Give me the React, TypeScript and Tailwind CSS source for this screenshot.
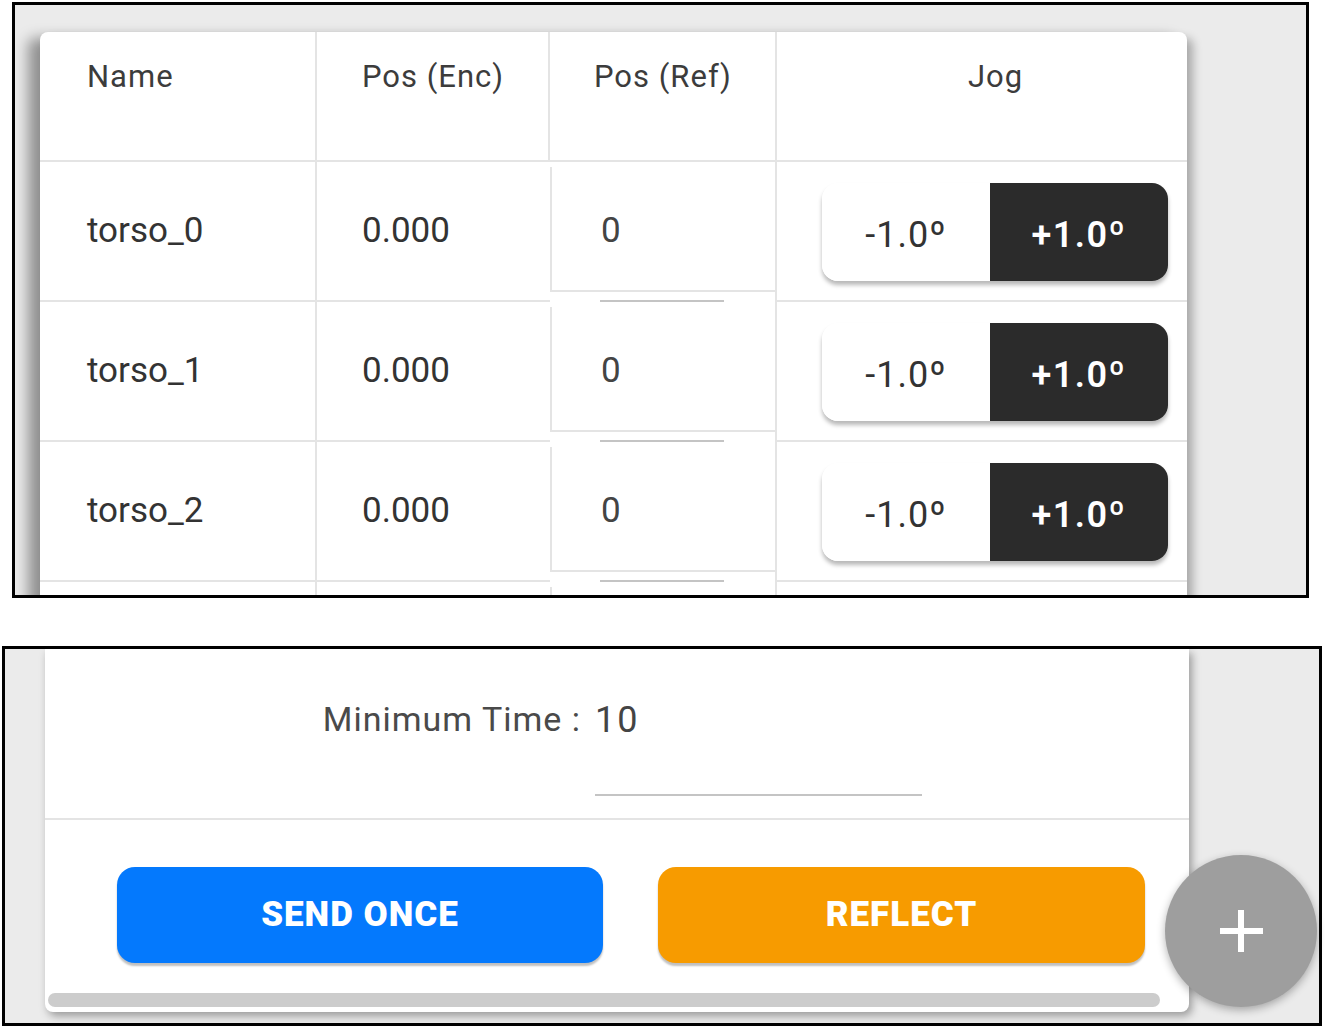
import React from "react";

const rows = ["torso_0", "torso_1", "torso_2", ""];

function Row({ name }: { name: string }) {
  const show = name !== "";
  return (
    <div className="flex h-[140px]">
      <div className="w-[277px] h-full border-r-2 border-b-2 border-[#e4e4e4] flex items-center pl-[47px] text-[35px] text-[#333]">
        {show ? name : null}
      </div>
      <div className="w-[233px] h-full border-b-2 border-[#e4e4e4] flex items-center pl-[45px] text-[35px] text-[#333]">
        {show ? "0.000" : null}
      </div>
      <div className="relative w-[225px] h-full flex flex-col">
        <div className="mt-[5px] mb-[10px] flex-1 border-l-2 border-b-2 border-[#e4e4e4] flex items-center pl-[49px] pt-[6px] text-[35px] text-[#444]">
          {show ? "0" : null}
        </div>
        <div className="absolute left-[50px] bottom-0 w-[124px] h-[2px] bg-[#c4c4c4]" />
      </div>
      <div className="flex-1 h-full border-l-2 border-b-2 border-[#e4e4e4] flex items-center pl-[45px] pt-[2px]">
        {show ? (
          <div className="flex h-[98px] w-[346px] rounded-[16px] shadow-[0_4px_4px_rgba(0,0,0,0.28)] overflow-hidden">
            <div className="w-[168px] h-full bg-white flex items-center justify-center pt-[6px] text-[36px] tracking-[1px] text-[#333]">
              -1.0º
            </div>
            <div className="flex-1 h-full bg-[#2b2b2b] flex items-center justify-center pt-[6px] text-[36px] tracking-[1.5px] font-semibold text-white">
              +1.0º
            </div>
          </div>
        ) : null}
      </div>
    </div>
  );
}

export default function App() {
  return (
    <div className="w-[1325px] h-[1029px] bg-white font-['Roboto',sans-serif] overflow-hidden">
      {/* top screenshot */}
      <div className="ml-[12px] mt-[2px] w-[1297px] h-[596px] border-[3px] border-black bg-[#ebebeb] overflow-hidden pt-[27px]">
        <div className="ml-[25px] w-[1147px] bg-white rounded-t-[8px] shadow-[-12px_6px_14px_rgba(0,0,0,0.38),6px_6px_10px_rgba(0,0,0,0.28)]">
          <div className="flex h-[130px] border-b-2 border-[#e4e4e4] text-[31px] leading-[36px] tracking-[1px] text-[#3c3c3c]">
            <div className="w-[277px] h-full border-r-2 border-[#e4e4e4] pl-[47px] pt-[27px]">Name</div>
            <div className="w-[233px] h-full border-r-2 border-[#e4e4e4] pl-[45px] pt-[27px]">Pos (Enc)</div>
            <div className="w-[225px] h-full pl-[44px] pt-[27px]">Pos (Ref)</div>
            <div className="flex-1 h-full border-l-2 border-[#e4e4e4] pl-[191px] pt-[27px]">Jog</div>
          </div>
          {rows.map((r, i) => (
            <Row key={i} name={r} />
          ))}
        </div>
      </div>

      {/* bottom screenshot */}
      <div className="relative ml-[2px] mt-[48px] w-[1320px] h-[380px] border-[3px] border-black bg-[#ebebeb]">
        <div className="ml-[40px] w-[1144px] h-[363px] bg-white rounded-b-[8px] shadow-[3px_4px_8px_rgba(0,0,0,0.35)] flex flex-col">
          <div className="flex h-[171px] border-b-2 border-[#e4e4e4]">
            <div className="w-[536px] text-right pt-[50px] text-[34px] leading-[40px] tracking-[1px] text-[#4a4a4a]">
              Minimum Time :
            </div>
            <div className="ml-[14px] mt-[51px] w-[327px] h-[96px] border-b-2 border-[#c4c4c4] text-[36px] leading-[40px] tracking-[2px] text-[#444]">
              10
            </div>
          </div>
          <div className="flex gap-[55px] pl-[72px] mt-[47px]">
            <div className="w-[486px] h-[96px] rounded-[18px] bg-[#0479fd] shadow-[0_3px_2px_rgba(0,0,0,0.25)] flex items-center justify-center text-white font-black text-[35px] tracking-[1px]">
              SEND ONCE
            </div>
            <div className="w-[487px] h-[96px] rounded-[18px] bg-[#f79b00] shadow-[0_3px_2px_rgba(0,0,0,0.25)] flex items-center justify-center text-white font-black text-[35px] tracking-[1px]">
              REFLECT
            </div>
          </div>
          <div className="ml-[3px] mt-[30px] w-[1112px] h-[14px] rounded-full bg-[#cccccc]" />
        </div>
        <div className="absolute left-[1160px] top-[206px] w-[152px] h-[152px] rounded-full bg-[#9e9e9e] shadow-[0_3px_8px_rgba(0,0,0,0.3)] flex items-center justify-center">
          <div className="relative w-[43px] h-[42px]">
            <div className="absolute left-0 top-[18px] w-[43px] h-[6px] bg-white" />
            <div className="absolute left-[18px] top-0 w-[6px] h-[42px] bg-white" />
          </div>
        </div>
      </div>
    </div>
  );
}
